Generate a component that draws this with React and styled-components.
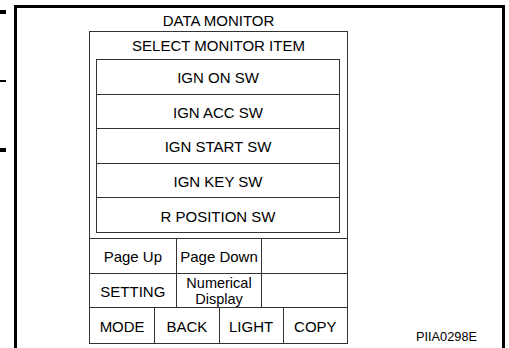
import React from "react";
import styled, { createGlobalStyle } from "styled-components";

const Global = createGlobalStyle`
  html, body { margin: 0; padding: 0; background: #fff; overflow: hidden; }
  body { font-family: "Liberation Sans", Arial, sans-serif; color: #000; }
`;

const LINE = "#333";
const FS = 15;

const Page = styled.div`
  display: flex;
  align-items: flex-start;
  width: 509px;
  height: 348px;
  overflow: hidden;
`;

const TickColumn = styled.div`
  width: 14px;
  flex: none;
  display: flex;
  flex-direction: column;
`;

const Tick = styled.div`
  width: 6px;
  height: ${(p) => p.$h}px;
  margin-top: ${(p) => p.$top}px;
  background: #000;
`;

const Frame = styled.div`
  flex: none;
  margin-top: 5px;
  width: 491px;
  height: 380px;
  box-sizing: border-box;
  border: 3px solid #000;
  display: flex;
  align-items: flex-start;
`;

const Body = styled.div`
  display: flex;
  align-items: stretch;
  width: 100%;
`;

const Column = styled.div`
  margin-left: 72px;
  width: 259px;
  flex: none;
  display: flex;
  flex-direction: column;
`;

const Header = styled.div`
  height: 23px;
  display: flex;
  align-items: center;
  justify-content: center;
  padding-top: 2px;
  box-sizing: border-box;
  font-size: ${FS}px;
`;

const Panel = styled.div`
  border: 1px solid ${LINE};
  height: 313px;
  box-sizing: border-box;
  display: flex;
  flex-direction: column;
`;

const PanelTitle = styled.div`
  height: 27px;
  display: flex;
  align-items: center;
  justify-content: center;
  font-size: ${FS}px;
`;

const ItemBox = styled.div`
  margin: 0 7px 0 6px;
  height: 174px;
  box-sizing: border-box;
  border: 1px solid ${LINE};
  display: flex;
  flex-direction: column;
`;

const Item = styled.div`
  flex: 1;
  display: flex;
  align-items: center;
  justify-content: center;
  font-size: ${FS}px;
  padding-top: 2px;
  & + & { border-top: 1px solid ${LINE}; }
`;

const Buttons = styled.div`
  margin-top: 5px;
  border-top: 1px solid ${LINE};
  flex: 1;
  display: flex;
  flex-direction: column;
`;

const ButtonRow = styled.div`
  height: ${(p) => p.$h}px;
  flex: ${(p) => (p.$fill ? 1 : "none")};
  display: grid;
  grid-template-columns: repeat(${(p) => p.$cols}, 1fr);
  & + & { border-top: 1px solid ${LINE}; }
`;

const Cell = styled.div`
  display: flex;
  align-items: center;
  justify-content: center;
  text-align: center;
  font-size: ${(p) => (p.$tight ? 14.5 : FS)}px;
  line-height: ${(p) => (p.$tight ? 16 : 17)}px;
  padding-top: 1px;
  & + & { border-left: 1px solid ${LINE}; }
`;

const CodeLabel = styled.div`
  margin-left: auto;
  margin-right: 25px;
  align-self: flex-end;
  font-size: 12.75px;
  line-height: 15px;
`;

export default function App() {
  const items = ["IGN ON SW", "IGN ACC SW", "IGN START SW", "IGN KEY SW", "R POSITION SW"];
  return (
    <>
      <Global />
      <Page>
        <TickColumn>
          <Tick $top={10} $h={4} />
          <Tick $top={66} $h={2} />
          <Tick $top={66} $h={4} />
        </TickColumn>
        <Frame>
          <Body>
            <Column>
              <Header>DATA MONITOR</Header>
              <Panel>
                <PanelTitle>SELECT MONITOR ITEM</PanelTitle>
                <ItemBox>
                  {items.map((t) => (
                    <Item key={t}>{t}</Item>
                  ))}
                </ItemBox>
                <Buttons>
                  <ButtonRow $h={34} $cols={3}>
                    <Cell>Page Up</Cell>
                    <Cell>Page Down</Cell>
                    <Cell />
                  </ButtonRow>
                  <ButtonRow $h={33} $cols={3}>
                    <Cell>SETTING</Cell>
                    <Cell $tight>
                      Numerical
                      <br />
                      Display
                    </Cell>
                    <Cell />
                  </ButtonRow>
                  <ButtonRow $fill $cols={4}>
                    <Cell>MODE</Cell>
                    <Cell>BACK</Cell>
                    <Cell>LIGHT</Cell>
                    <Cell>COPY</Cell>
                  </ButtonRow>
                </Buttons>
              </Panel>
            </Column>
            <CodeLabel>PIIA0298E</CodeLabel>
          </Body>
        </Frame>
      </Page>
    </>
  );
}
